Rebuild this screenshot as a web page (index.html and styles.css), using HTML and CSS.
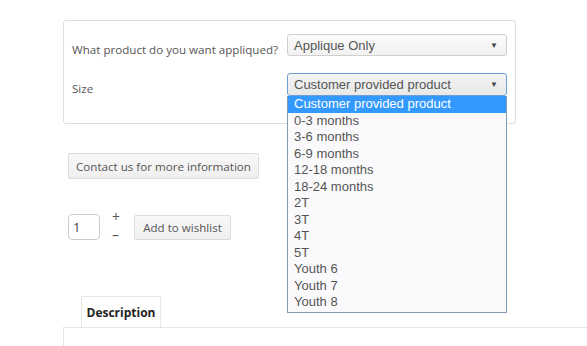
FILE: index.html
```html
<!DOCTYPE html>
<html>
<head>
<meta charset="utf-8">
<link rel="stylesheet" href="styles.css">
</head>
<body>
<div class="page">
  <div class="panel">
    <div class="row">
      <div class="label">What product do you want appliqued?</div>
      <div class="select"><span>Applique Only</span><span class="arrow">▼</span></div>
    </div>
    <div class="row row2">
      <div class="label">Size</div>
      <div class="select-wrap">
        <div class="select focus"><span>Customer provided product</span><span class="arrow">▼</span></div>
        <ul class="list">
          <li class="sel">Customer provided product</li>
          <li>0-3 months</li>
          <li>3-6 months</li>
          <li>6-9 months</li>
          <li>12-18 months</li>
          <li>18-24 months</li>
          <li>2T</li>
          <li>3T</li>
          <li>4T</li>
          <li>5T</li>
          <li>Youth 6</li>
          <li>Youth 7</li>
          <li>Youth 8</li>
        </ul>
      </div>
    </div>
  </div>

  <div class="btn contact">Contact us for more information</div>

  <div class="qty-row">
    <div class="qty">1</div>
    <div class="pm"><span>+</span><span>–</span></div>
    <div class="btn wish">Add to wishlist</div>
  </div>

  <div class="tabs">
    <div class="tab">Description</div>
  </div>
  <div class="tab-body"></div>
</div>
</body>
</html>
```
FILE: styles.css
```css
html, body {
  margin: 0;
  padding: 0;
  background: #fff;
}
body {
  font-family: "Open Sans", "Liberation Sans", sans-serif;
  font-size: 11.6px;
  color: #555;
  overflow: hidden;
  height: 346px;
}
.page {
  padding: 20px 0 0 63px;
}
.panel {
  border: 1px solid #dedede;
  border-radius: 3px;
  padding: 13px 0 0 8px;
  height: 89px;
  width: 443px;
}
.row {
  display: flex;
  align-items: flex-start;
}
.row2 {
  margin-top: 15px;
}
.label {
  width: 215px;
  padding-top: 8px;
  line-height: 16px;
  white-space: nowrap;
}
.select-wrap {
  position: relative;
}
.select {
  width: 220px;
  height: 22px;
  box-sizing: border-box;
  border: 1px solid #cfcfcf;
  border-radius: 3px;
  background: linear-gradient(#fbfbfb, #f1f1f1);
  font-family: "Liberation Sans", Arial, sans-serif;
  font-size: 13px;
  color: #555;
  display: flex;
  align-items: center;
  justify-content: space-between;
  padding: 0 8px 0 6px;
}
.select.focus {
  height: 23px;
  border-color: #6d9fd6;
  background: linear-gradient(#f4f4f4, #e8e8e8);
}
.arrow {
  font-size: 8px;
  color: #444;
}
.list {
  position: absolute;
  left: 0;
  top: 23px;
  width: 220px;
  box-sizing: border-box;
  margin: 0;
  padding: 0 0 1px;
  list-style: none;
  border: 1px solid #7f9db9;
  border-top: 0;
  background: #fafafc;
  font-family: "Liberation Sans", Arial, sans-serif;
  font-size: 13px;
  color: #555;
}
.list li {
  height: 16.5px;
  line-height: 16px;
  padding-left: 6px;
}
.list li.sel {
  background: #3399ff;
  color: #fff;
}
.btn {
  display: inline-flex;
  align-items: center;
  justify-content: center;
  box-sizing: border-box;
  border: 1px solid #dcdcdc;
  border-radius: 2px;
  background: linear-gradient(#f8f8f8, #efefef);
  color: #555;
  white-space: nowrap;
}
.contact {
  margin: 29px 0 0 5px;
  height: 26px;
  width: 191px;
}
.qty-row {
  display: flex;
  align-items: flex-start;
  margin: 35px 0 0 5px;
}
.qty {
  width: 32px;
  height: 26px;
  box-sizing: border-box;
  border: 1px solid #ccc;
  border-radius: 4px;
  padding-left: 4px;
  font-size: 13px;
  line-height: 24px;
  color: #444;
}
.pm {
  display: flex;
  flex-direction: column;
  margin: -6px 0 -10px 12px;
  width: 22px;
  font-size: 14px;
  line-height: 18px;
  color: #555;
}
.wish {
  margin-top: 1px;
  height: 25px;
  width: 97px;
}
.tabs {
  display: flex;
  margin-top: 56px;
  padding-left: 18px;
}
.tab {
  width: 80px;
  height: 31px;
  box-sizing: border-box;
  border: 1px solid #e8e8e8;
  border-bottom: 0;
  font-weight: bold;
  color: #222;
  display: flex;
  align-items: center;
  justify-content: center;
  font-size: 12px;
}
.tab-body {
  border-top: 1px solid #e5e5e5;
  border-left: 1px solid #e5e5e5;
  height: 18px;
}
```
